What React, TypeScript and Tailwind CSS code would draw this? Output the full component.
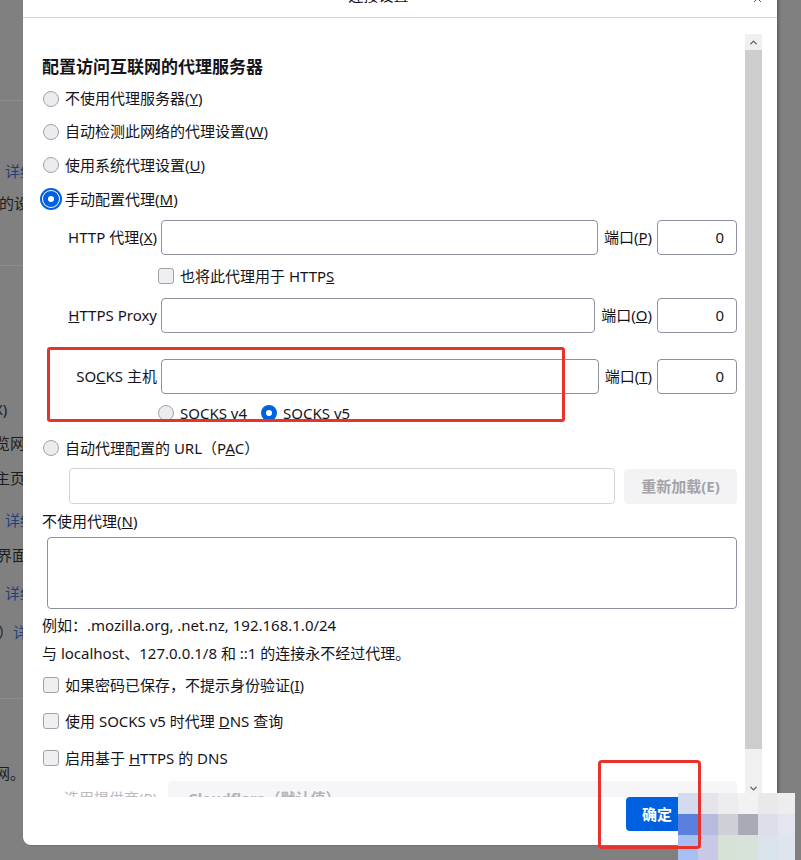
import { X, ChevronUp, ChevronDown } from "lucide-react";

function Radio({ checked, focus }: { checked?: boolean; focus?: boolean }) {
  if (checked && focus) {
    return <span className="w-4 h-4 shrink-0 rounded-full border-[5px] border-[#0061e0] bg-white outline-2 outline-offset-1 outline-[#0061e0]" />;
  }
  if (checked) {
    return <span className="w-4 h-4 shrink-0 rounded-full border-[5px] border-[#0061e0] bg-white" />;
  }
  return <span className="w-4 h-4 shrink-0 rounded-full border border-[#a1a1aa] bg-[#ececef]" />;
}

function Checkbox() {
  return <span className="w-4 h-4 shrink-0 rounded-[3px] border border-[#a1a1aa] bg-[#efeff1]" />;
}

function ProxyRow({ label, portKey }: { label: React.ReactNode; portKey: string }) {
  return (
    <div className="flex items-center h-[42px] shrink-0">
      <div className="w-[115px] text-right whitespace-nowrap">{label}</div>
      <div className="ml-[4px] flex-1 h-[35px] rounded-[4px] border border-[#8f8f9d] bg-white" />
      <div className="ml-[6px] whitespace-nowrap">
        端口(<u>{portKey}</u>)
      </div>
      <div className="ml-[5px] w-[80px] h-[35px] rounded-[4px] border border-[#8f8f9d] bg-white flex items-center justify-end pr-[12px]">
        0
      </div>
    </div>
  );
}

function BackgroundPage() {
  return (
    <div className="flex flex-col w-[23px] text-[#1d1d1f] leading-[20px] whitespace-nowrap">
      <div className="h-[100px]" />
      <div className="h-px bg-[#8d8d8d]" />
      <div className="mt-[60px] h-[20px] pl-[5px] text-[#213f78]">详细</div>
      <div className="mt-[12px] h-[20px] ml-[-1px]">的设</div>
      <div className="mt-[52px] h-px bg-[#8d8d8d]" />
      <div className="mt-[133px] h-[20px] ml-[-6px]">X)</div>
      <div className="mt-[14px] h-[20px] ml-[-5px]">览网页</div>
      <div className="mt-[15px] h-[20px] ml-[-5px]">主页面</div>
      <div className="mt-[22px] h-[20px] pl-[5px] text-[#213f78]">详细</div>
      <div className="mt-[15px] h-[20px] ml-[-3px]">界面搭</div>
      <div className="mt-[18px] h-[20px] pl-[5px] text-[#213f78]">详细</div>
      <div className="mt-[19px] h-[20px] ml-[-2px]">
        ）<span className="text-[#213f78]">详</span>
      </div>
      <div className="mt-[56px] h-px bg-[#8d8d8d]" />
      <div className="mt-[64px] h-[20px] ml-[-5px]">网。</div>
    </div>
  );
}

const mosaic = [
  "#d5dbef", "#e7e3ea", "#eeecee", "#f2f2f2", "#e9e9eb", "#ededf0",
  "#5a7fdd", "#b7bbdf", "#ced0d8", "#a8aab5", "#dcdfe8", "#e3e6ee",
  "#a8bff2", "#c9c9e6", "#d5e2d5", "#d7e3da", "#d9e4ea", "#dee5ee",
];

export default function App() {
  return (
    <div className="relative w-[801px] h-[860px] overflow-hidden bg-[#808080] font-['Noto_Sans','Noto_Sans_CJK_SC',sans-serif] text-[15px] text-[#15141a]">
      <BackgroundPage />

      {/* dialog */}
      <div className="absolute left-[23px] top-[-30px] w-[754px] h-[875px] bg-white rounded-b-[8px] flex flex-col shadow-[2px_0_3px_rgba(0,0,0,0.25)]">
        <div className="h-[48px] shrink-0 border-b border-[#d6d6da] flex items-end pb-[12px]">
          <div className="flex-1" />
          <div className="mr-[30px] leading-[20px]">连接设置</div>
          <div className="flex-1 flex justify-end pr-[13px]">
            <X size={13} strokeWidth={1.6} className="text-[#3a3a3a]" />
          </div>
        </div>

        <div className="h-[779px] shrink-0 flex">
          <div className="w-[722px] pl-[19px] pr-[8px] overflow-hidden flex flex-col">
            <div className="h-[34px] shrink-0" />
            <div className="h-[30px] shrink-0 flex items-center text-[17px] font-bold">配置访问互联网的代理服务器</div>

            <div className="h-[33px] shrink-0 flex items-center gap-[6px] pl-[1px]">
              <Radio />
              <span>
                不使用代理服务器(<u>Y</u>)
              </span>
            </div>
            <div className="h-[33px] shrink-0 flex items-center gap-[6px] pl-[1px]">
              <Radio />
              <span>
                自动检测此网络的代理设置(<u>W</u>)
              </span>
            </div>
            <div className="h-[34px] shrink-0 flex items-center gap-[6px] pl-[1px]">
              <Radio />
              <span>
                使用系统代理设置(<u>U</u>)
              </span>
            </div>
            <div className="h-[34px] shrink-0 flex items-center gap-[6px] pl-[1px]">
              <Radio checked focus />
              <span>
                手动配置代理(<u>M</u>)
              </span>
            </div>

            <ProxyRow
              label={
                <>
                  HTTP 代理(<u>X</u>)
                </>
              }
              portKey="P"
            />
            <div className="h-[36px] shrink-0 flex items-center gap-[6px] pl-[116px]">
              <Checkbox />
              <span>
                也将此代理用于 HTTP<u>S</u>
              </span>
            </div>
            <ProxyRow
              label={
                <>
                  <u>H</u>TTPS Proxy
                </>
              }
              portKey="O"
            />
            <div className="h-[19px] shrink-0" />
            <ProxyRow
              label={
                <>
                  SO<u>C</u>KS 主机
                </>
              }
              portKey="T"
            />
            <div className="h-[32px] shrink-0 flex items-center pl-[116px]">
              <Radio />
              <span className="ml-[6px]">SOCKS v4</span>
              <span className="ml-[14px] flex items-center gap-[6px]">
                <Radio checked />
                <span>SOCKS v5</span>
              </span>
            </div>

            <div className="h-[38px] shrink-0 flex items-center gap-[6px] pl-[1px]">
              <Radio />
              <span>
                自动代理配置的 URL（P<u>A</u>C）
              </span>
            </div>
            <div className="h-[38px] shrink-0 flex items-center pl-[27px]">
              <div className="flex-1 h-[36px] rounded-[4px] border border-[#d4d4d8] bg-white" />
              <div className="ml-[9px] w-[113px] h-[35px] rounded-[4px] bg-[#f3f3f5] flex items-center justify-center font-bold text-[#a3a3a8]">
                重新加载(E)
              </div>
            </div>

            <div className="h-[32px] shrink-0 flex items-center">
              <span>
                不使用代理(<u>N</u>)
              </span>
            </div>
            <div className="ml-[5px] h-[72px] shrink-0 rounded-[4px] border border-[#8f8f9d] bg-white" />
            <div className="h-[32px] shrink-0 flex items-center">例如：.mozilla.org, .net.nz, 192.168.1.0/24</div>
            <div className="h-[24px] shrink-0 flex items-center">与 localhost、127.0.0.1/8 和 ::1 的连接永不经过代理。</div>

            <div className="h-[40px] shrink-0 flex items-center gap-[6px] pl-[1px]">
              <Checkbox />
              <span>
                如果密码已保存，不提示身份验证(<u>I</u>)
              </span>
            </div>
            <div className="h-[32px] shrink-0 flex items-center gap-[6px] pl-[1px]">
              <Checkbox />
              <span>
                使用 SOCKS v5 时代理 <u>D</u>NS 查询
              </span>
            </div>
            <div className="h-[42px] shrink-0 flex items-center gap-[6px] pl-[1px]">
              <Checkbox />
              <span>
                启用基于 <u>H</u>TTPS 的 DNS
              </span>
            </div>
            <div className="mt-[2px] h-[34px] shrink-0 flex items-center text-[#b9b9be]">
              <span className="pl-[22px] w-[126px] whitespace-nowrap">选用提供商(P)</span>
              <div className="flex-1 h-[34px] rounded-[4px] bg-[#f6f6f8] flex items-center pl-[20px] font-bold text-[#b4b4ba]">
                Cloudflare（默认值）
              </div>
            </div>
          </div>

          {/* scrollbar */}
          <div className="w-[17px] shrink-0 pt-[16px] flex flex-col">
            <div className="h-[16px] bg-[#f0f0f0] flex items-center justify-center">
              <ChevronUp size={11} strokeWidth={3} className="text-[#606060]" />
            </div>
            <div className="h-[699px] bg-[#cdcdcd]" />
            <div className="flex-1 bg-[#f0f0f0] flex items-end justify-center pb-[3px]">
              <ChevronDown size={11} strokeWidth={3} className="text-[#606060]" />
            </div>
          </div>
        </div>

        <div className="flex-1 pl-[603px]">
          <div className="w-[62px] h-[34px] rounded-[4px] bg-[#0061e0] text-white font-bold flex items-center justify-center">
            确定
          </div>
        </div>
      </div>

      {/* pixelated cover */}
      <div className="absolute left-[678px] top-[793px] grid grid-cols-[20px_20px_20px_20px_20px_17px] grid-rows-[21px_21px_26px]">
        {mosaic.map((c, i) => (
          <div key={i} style={{ backgroundColor: c }} />
        ))}
      </div>

      {/* annotation boxes */}
      <div className="absolute left-[47px] top-[347px] w-[518px] h-[75px] rounded-[3px] border-[3px] border-[#e8332d]" />
      <div className="absolute left-[598px] top-[760px] w-[103px] h-[89px] rounded-[4px] border-[3px] border-[#e8332d]" />
    </div>
  );
}
